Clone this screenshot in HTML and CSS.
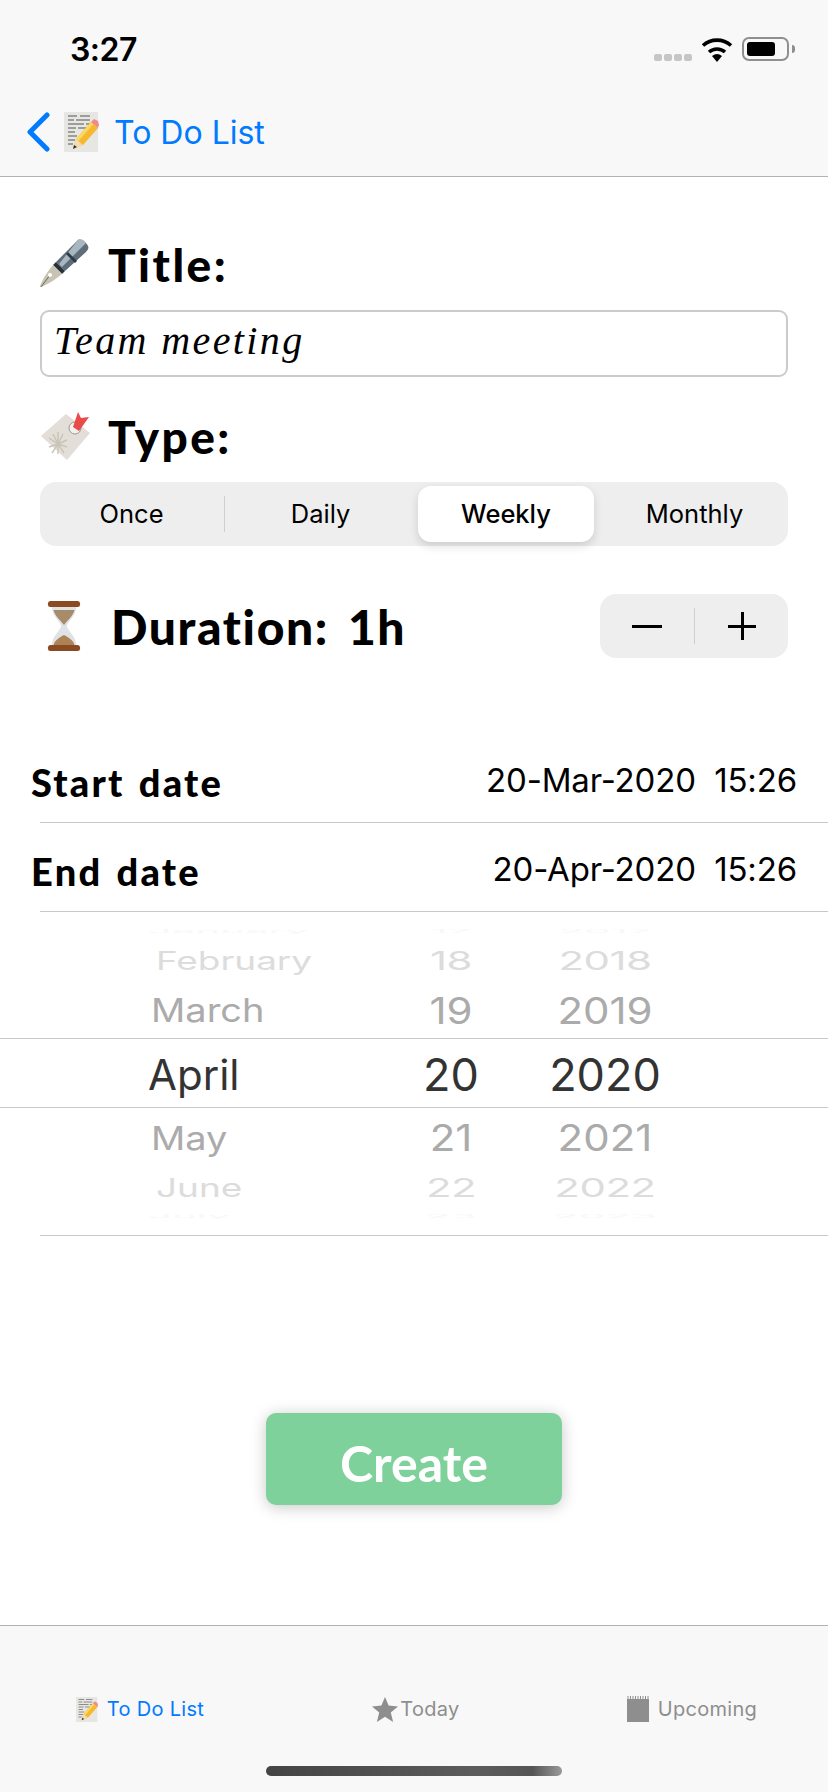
FILE: index.html
```html
<!DOCTYPE html>
<html lang="en">

<head>
  <meta charset="UTF-8">
  <title>To Do List</title>
  <link rel="stylesheet" href="styles.css">
</head>

<body>
  <svg class="defs" width="0" height="0">
    <symbol id="memo" viewBox="0 0 35 40">
      <rect x="0" y="0" width="34" height="40" fill="#e6e6e3"/>
      <path d="M4 4h9m3 0h10M4 8h6m2 0h14M4 12h16m2 0h6M4 16h8m2 0h8M4 20h7M4 24h9M4 28h7M4 32h5" stroke="#555" stroke-width="1" fill="none"/>
      <path d="M9 37l3-10 15-17 7 6-15 17z" fill="#f5b82e"/>
      <path d="M12 27l15-17 2.500 2-15 17z" fill="#fbd763"/>
      <path d="M9 37l3-10 7 6z" fill="#f3dcb0"/>
      <path d="M9 37l1-4 3 2z" fill="#333"/>
      <path d="M27 10l3-3 4 2 1 4-1 3z" fill="#ee8a8a"/>
    </symbol>
  </svg>

  <header class="top-bar">
    <div class="status-bar">
      <span class="clock">3:27</span>
      <div class="status-icons">
        <div class="signal"><i></i><i></i><i></i><i></i></div>
        <svg class="wifi" width="32" height="24" viewBox="0 0 32 24">
          <path d="M16 24l-5-6a8 8 0 0 1 10 0z" fill="#000"/>
          <path d="M8 14a12 12 0 0 1 16 0" stroke="#000" stroke-width="3.6" fill="none"/>
          <path d="M2 7.5a21 21 0 0 1 28 0" stroke="#000" stroke-width="3.6" fill="none"/>
        </svg>
        <div class="battery"><div class="battery-fill"></div></div>
        <div class="battery-nub"></div>
      </div>
    </div>
    <div class="nav-bar">
      <svg class="chevron" width="24" height="40" viewBox="0 0 24 40">
        <path d="M21 3L4 20l17 17" stroke="#007aff" stroke-width="5" stroke-linecap="round" stroke-linejoin="round" fill="none"/>
      </svg>
      <svg class="nav-memo" width="35" height="40"><use href="#memo"/></svg>
      <span class="nav-title">To Do List</span>
    </div>
  </header>

  <main class="form">
    <div class="field-title first">
      <svg class="field-icon" width="50" height="50" viewBox="0 0 50 50">
        <path d="M38 1c3-2 9 3 10 6 1 2 0 4-2 6L25 32l-9-9z" fill="#5d6d7a"/>
        <path d="M38 1c3-2 7 1 8 3L22 28l-3-3z" fill="#a8b6c0"/>
        <path d="M28 13l9 9-2 2-9-9z" fill="#2f3a44"/>
        <path d="M16 23l9 9-3 3-9-9z" fill="#2b3138"/>
        <path d="M13 26l9 9c-5 4-11 9-21 13 0 0-1 0-1-1 4-10 9-16 13-21z" fill="#c9c3b4"/>
        <path d="M1 48l9-12" stroke="#6b6659" stroke-width="1"/>
        <circle cx="10" cy="36" r="2" fill="#fff"/>
      </svg>
      <span>Title:</span>
    </div>
    <div class="title-input">Team meeting</div>

    <div class="field-title second">
      <svg class="field-icon" width="50" height="50" viewBox="0 0 50 50">
        <path d="M26 3l24 19-23 27L1 25z" fill="#e3ded7"/>
        <path d="M18 33l-9-6m9 6l-5-10m5 10v-12m0 12l5-10m-5 10l9-4m-9 4l9 3m-9-3l6 9m-6-9v10m0-10l-6 9m6-9l-9 3" stroke="#c9c4b6" stroke-width="1.4"/>
        <circle cx="35" cy="17" r="6" fill="#f4f1ec" stroke="#999" stroke-width="1"/>
        <path d="M33 16l5-15 3 6 8-1-10 14z" fill="#e94b4b"/>
      </svg>
      <span>Type:</span>
    </div>
    <div class="segmented">
      <div class="segment segment-first">Once</div>
      <div class="segment">Daily</div>
      <div class="segment segment-active">Weekly</div>
      <div class="segment">Monthly</div>
    </div>

    <div class="duration-row">
      <div class="duration-label">
        <svg class="hourglass" width="34" height="50" viewBox="0 0 36 50" preserveAspectRatio="none">
          <path d="M5 5h26c0 10-9 15-10 20 1 5 10 10 10 20H5c0-10 9-15 10-20-1-5-10-10-10-20z" fill="#dfe3e6"/>
          <path d="M7 9h22c-1 6-8 11-11 15-3-4-10-9-11-15z" fill="#a88b68"/>
          <path d="M7 44c1-5 7-8 11-10 4 2 10 5 11 10z" fill="#ad8255"/>
          <rect x="1" y="0" width="34" height="6" rx="2.5" fill="#8a4a22"/>
          <rect x="1" y="44" width="34" height="6" rx="2.5" fill="#8a4a22"/>
        </svg>
        <span>Duration: 1h</span>
      </div>
      <div class="stepper">
        <div class="step"><span class="minus"></span></div>
        <div class="step-divider"></div>
        <div class="step"><span class="plus"></span></div>
      </div>
    </div>

    <div class="date-row">
      <span class="date-label">Start date</span>
      <span class="date-value">20-Mar-2020&nbsp; 15:26</span>
    </div>
    <div class="date-row">
      <span class="date-label">End date</span>
      <span class="date-value">20-Apr-2020&nbsp; 15:26</span>
    </div>

    <div class="picker">
      <div class="wheel-row edge edge-top"><span>January</span><span>17</span><span>2017</span></div>
      <div class="wheel-row far far-top"><span>February</span><span>18</span><span>2018</span></div>
      <div class="wheel-row near near-top"><span>March</span><span>19</span><span>2019</span></div>
      <div class="wheel-row current"><span>April</span><span>20</span><span>2020</span></div>
      <div class="wheel-row near near-bottom"><span>May</span><span>21</span><span>2021</span></div>
      <div class="wheel-row far far-bottom"><span>June</span><span>22</span><span>2022</span></div>
      <div class="wheel-row edge edge-bottom"><span>July</span><span>23</span><span>2023</span></div>
    </div>
    <div class="picker-end"></div>

    <div class="create-wrap">
      <div class="create-btn">Create</div>
    </div>
  </main>

  <footer class="tab-bar">
    <div class="tabs">
      <div class="tab tab-active">
        <svg width="22" height="25"><use href="#memo"/></svg>
        <span>To Do List</span>
      </div>
      <div class="tab tab-today">
        <svg width="26" height="25" viewBox="0 0 26 25">
          <path d="M13 0l3.6 8.6 9.4.8-7.2 6 2.3 9.6L13 19.8 4.900 25l2.300-9.600-7.200-6 9.400-.8z" fill="#8e8e8e"/>
        </svg>
        <span>Today</span>
      </div>
      <div class="tab">
        <svg width="22" height="26" viewBox="0 0 22 26">
          <rect x="0" y="3" width="22" height="23" fill="#8e8e8e"/>
          <path d="M1 0v3M3.500 0v3M6 0v3M8.500 0v3M11 0v3M13.500 0v3M16 0v3M18.500 0v3M21 0v3" stroke="#8e8e8e" stroke-width="1"/>
        </svg>
        <span>Upcoming</span>
      </div>
    </div>
    <div class="home-bar"></div>
  </footer>
</body>

</html>
```

FILE: styles.css
```css
* {
  box-sizing: border-box;
}

html,
body {
  margin: 0;
  padding: 0;
}

body {
  width: 828px;
  height: 1792px;
  display: flex;
  flex-direction: column;
  overflow: hidden;
  background-color: #fff;
  color: #000;
  font-family: Inter, "Liberation Sans", sans-serif;
}

.defs {
  position: absolute;
}

svg {
  display: block;
  flex: none;
}

/* barra superior */
.top-bar {
  height: 177px;
  background-color: #f8f8f8;
  border-bottom: 1px solid #b2b2b2;
}

.status-bar {
  height: 88px;
  padding: 30px 33px 0 70px;
  display: flex;
  justify-content: space-between;
}

.clock {
  font-size: 32px;
  font-weight: 600;
  line-height: 39px;
  letter-spacing: -0.5px;
}

.status-icons {
  display: flex;
  align-items: flex-start;
  padding-top: 7px;
}

.signal {
  display: flex;
  gap: 2px;
  margin: 17px 9px 0 0;
}

.signal i {
  width: 8px;
  height: 7px;
  border-radius: 2px;
  background-color: #c6c6c6;
}

.wifi {
  margin: 1px 9px 0 0;
}

.battery {
  width: 47px;
  height: 24px;
  padding: 3px;
  border: 2px solid #8f8f8f;
  border-radius: 7px;
}

.battery-fill {
  width: 28px;
  height: 100%;
  background-color: #000;
  border-radius: 3px;
}

.battery-nub {
  width: 3px;
  height: 8px;
  margin: 8px 0 0 3px;
  background-color: #8f8f8f;
  border-radius: 0 4px 4px 0;
}

.nav-bar {
  height: 88px;
  padding: 24px 0 0 26px;
  display: flex;
  align-items: flex-start;
  color: #007aff;
}

.nav-memo {
  margin-left: 14px;
}

.nav-title {
  margin: 1px 0 0 15px;
  font-size: 32px;
  line-height: 40px;
}

/* formulario */
.form {
  flex: 1;
}

.field-title {
  height: 56px;
  margin-left: 40px;
  display: flex;
  align-items: center;
  font-family: Lato, sans-serif;
  font-weight: 900;
  font-size: 46px;
  letter-spacing: 2.5px;
}

.field-title.first {
  margin-top: 59px;
}

.field-title.second {
  margin-top: 31px;
}

.field-icon {
  margin-right: 18px;
}

.title-input {
  height: 67px;
  margin: 18px 40px 0;
  padding-left: 12px;
  border: 2px solid #cbcbcb;
  border-radius: 9px;
  font-family: "Liberation Serif", serif;
  font-style: italic;
  font-size: 40px;
  line-height: 58px;
  letter-spacing: 2.4px;
}

.segmented {
  height: 64px;
  margin: 18px 40px 0;
  padding: 4px 0;
  display: grid;
  grid-template-columns: repeat(4, 187px);
  background-color: #eeeeee;
  border-radius: 16px;
}

.segment {
  height: 56px;
  text-align: center;
  font-size: 25.5px;
  font-weight: 400;
  line-height: 56px;
}

.segment-first {
  position: relative;
  padding-right: 4px;
}

/* divisor entre Once y Daily */
.segment-first::after {
  content: "";
  position: absolute;
  top: 10px;
  right: 2px;
  width: 1px;
  height: 36px;
  background-color: #cfcfcf;
}

.segment-active {
  margin: 0 7px 0 4px;
  background-color: #fff;
  border-radius: 13px;
  font-weight: 500;
  box-shadow: 0 4px 10px rgba(0, 0, 0, 0.14);
}

.duration-row {
  height: 64px;
  margin: 48px 40px 0 47px;
  display: flex;
  justify-content: space-between;
  align-items: center;
}

.duration-label {
  display: flex;
  align-items: center;
  font-family: Lato, sans-serif;
  font-weight: 900;
  font-size: 48px;
  letter-spacing: 1.6px;
  word-spacing: 6px;
}

.hourglass {
  margin-right: 30px;
}

.stepper {
  width: 188px;
  height: 64px;
  display: flex;
  align-items: center;
  background-color: #eeeeee;
  border-radius: 16px;
}

.step {
  flex: 1;
  display: flex;
  justify-content: center;
}

.step-divider {
  width: 1px;
  height: 36px;
  background-color: #cfcfcf;
}

.minus {
  width: 30px;
  height: 3px;
  background-color: #000;
}

.plus {
  width: 28px;
  height: 28px;
  margin-left: 2px;
  background:
    linear-gradient(#000, #000) center / 28px 3px no-repeat,
    linear-gradient(#000, #000) center / 3px 28px no-repeat;
}

.date-row {
  height: 89px;
  margin-left: 40px;
  padding-right: 31px;
  display: flex;
  justify-content: space-between;
  border-bottom: 1px solid #c8c8c8;
}

.duration-row + .date-row {
  margin-top: 76px;
}

.date-label {
  margin: 25px 0 0 -9px;
  font-family: Lato, sans-serif;
  font-weight: 900;
  font-size: 38px;
  line-height: 46px;
  letter-spacing: 2.2px;
  word-spacing: 3px;
}

.date-value {
  margin-top: 26px;
  font-size: 33px;
  line-height: 41px;
  letter-spacing: -0.15px;
}

/* selector de fecha */
.picker {
  padding: 12px 0 13px;
}

.wheel-row {
  display: grid;
  grid-template-columns: 222px 162px 146px;
  padding-left: 148px;
  overflow: hidden;
  font-size: 42px;
}

.wheel-row span {
  display: block;
  text-align: center;
}

.wheel-row span:first-child {
  text-align: left;
}

.edge {
  color: #f8f8f8;
  height: 12px;
  line-height: 12px;
}

.edge span {
  transform: scaleY(0.1);
}

.edge-top {
  height: 15px;
  line-height: 15px;
}

.far {
  color: #dcdcdc;
  line-height: 44px;
  letter-spacing: -0.5px;
}

.far span {
  transform: scaleY(0.62);
}

.far span:first-child {
  margin-left: 8px;
  font-size: 30px;
  letter-spacing: 0;
  transform: scaleX(1.23) scaleY(0.85);
  transform-origin: left center;
}

.far-top {
  height: 43px;
}

.far-bottom {
  height: 44px;
}

.near {
  color: #ababab;
  line-height: 57px;
}

.near span {
  transform: scaleY(0.86);
}

.near span:first-child {
  margin-left: 3px;
  font-size: 38px;
}

.near-top {
  height: 56px;
}

.near-bottom {
  height: 58px;
  line-height: 60px;
}

.current {
  height: 70px;
  color: #333;
  font-size: 45px;
  line-height: 71px;
  border-top: 1px solid #c8c8c8;
  border-bottom: 1px solid #c8c8c8;
}

.current span:first-child {
  font-size: 42px;
}

.picker-end {
  margin-left: 40px;
  border-bottom: 1px solid #c8c8c8;
}

.create-wrap {
  margin-top: 177px;
  display: flex;
  justify-content: center;
}

.create-btn {
  width: 296px;
  height: 92px;
  background-color: #7fd19b;
  border-radius: 10px;
  box-shadow: 0 2px 16px rgba(0, 0, 0, 0.22);
  color: #fff;
  text-align: center;
  font-family: Lato, sans-serif;
  font-weight: 700;
  font-size: 50px;
  line-height: 100px;
}

/* barra inferior */
.tab-bar {
  height: 167px;
  background-color: #f8f8f8;
  border-top: 1px solid #b2b2b2;
}

.tabs {
  height: 140px;
  padding: 70px 0 0 2px;
  display: grid;
  grid-template-columns: repeat(3, 276px);
}

.tab {
  height: 26px;
  display: flex;
  justify-content: center;
  align-items: center;
  gap: 9px;
  color: #8e8e8e;
  font-size: 20px;
  letter-spacing: 0.3px;
}

.tab-today {
  gap: 2px;
}

.tab-active {
  color: #007aff;
}

.home-bar {
  width: 296px;
  height: 10px;
  margin-left: 266px;
  border-radius: 5px;
  background: linear-gradient(90deg, #444, #5c5c5c 70%, #555 90%, #9a9a9a);
}
```
